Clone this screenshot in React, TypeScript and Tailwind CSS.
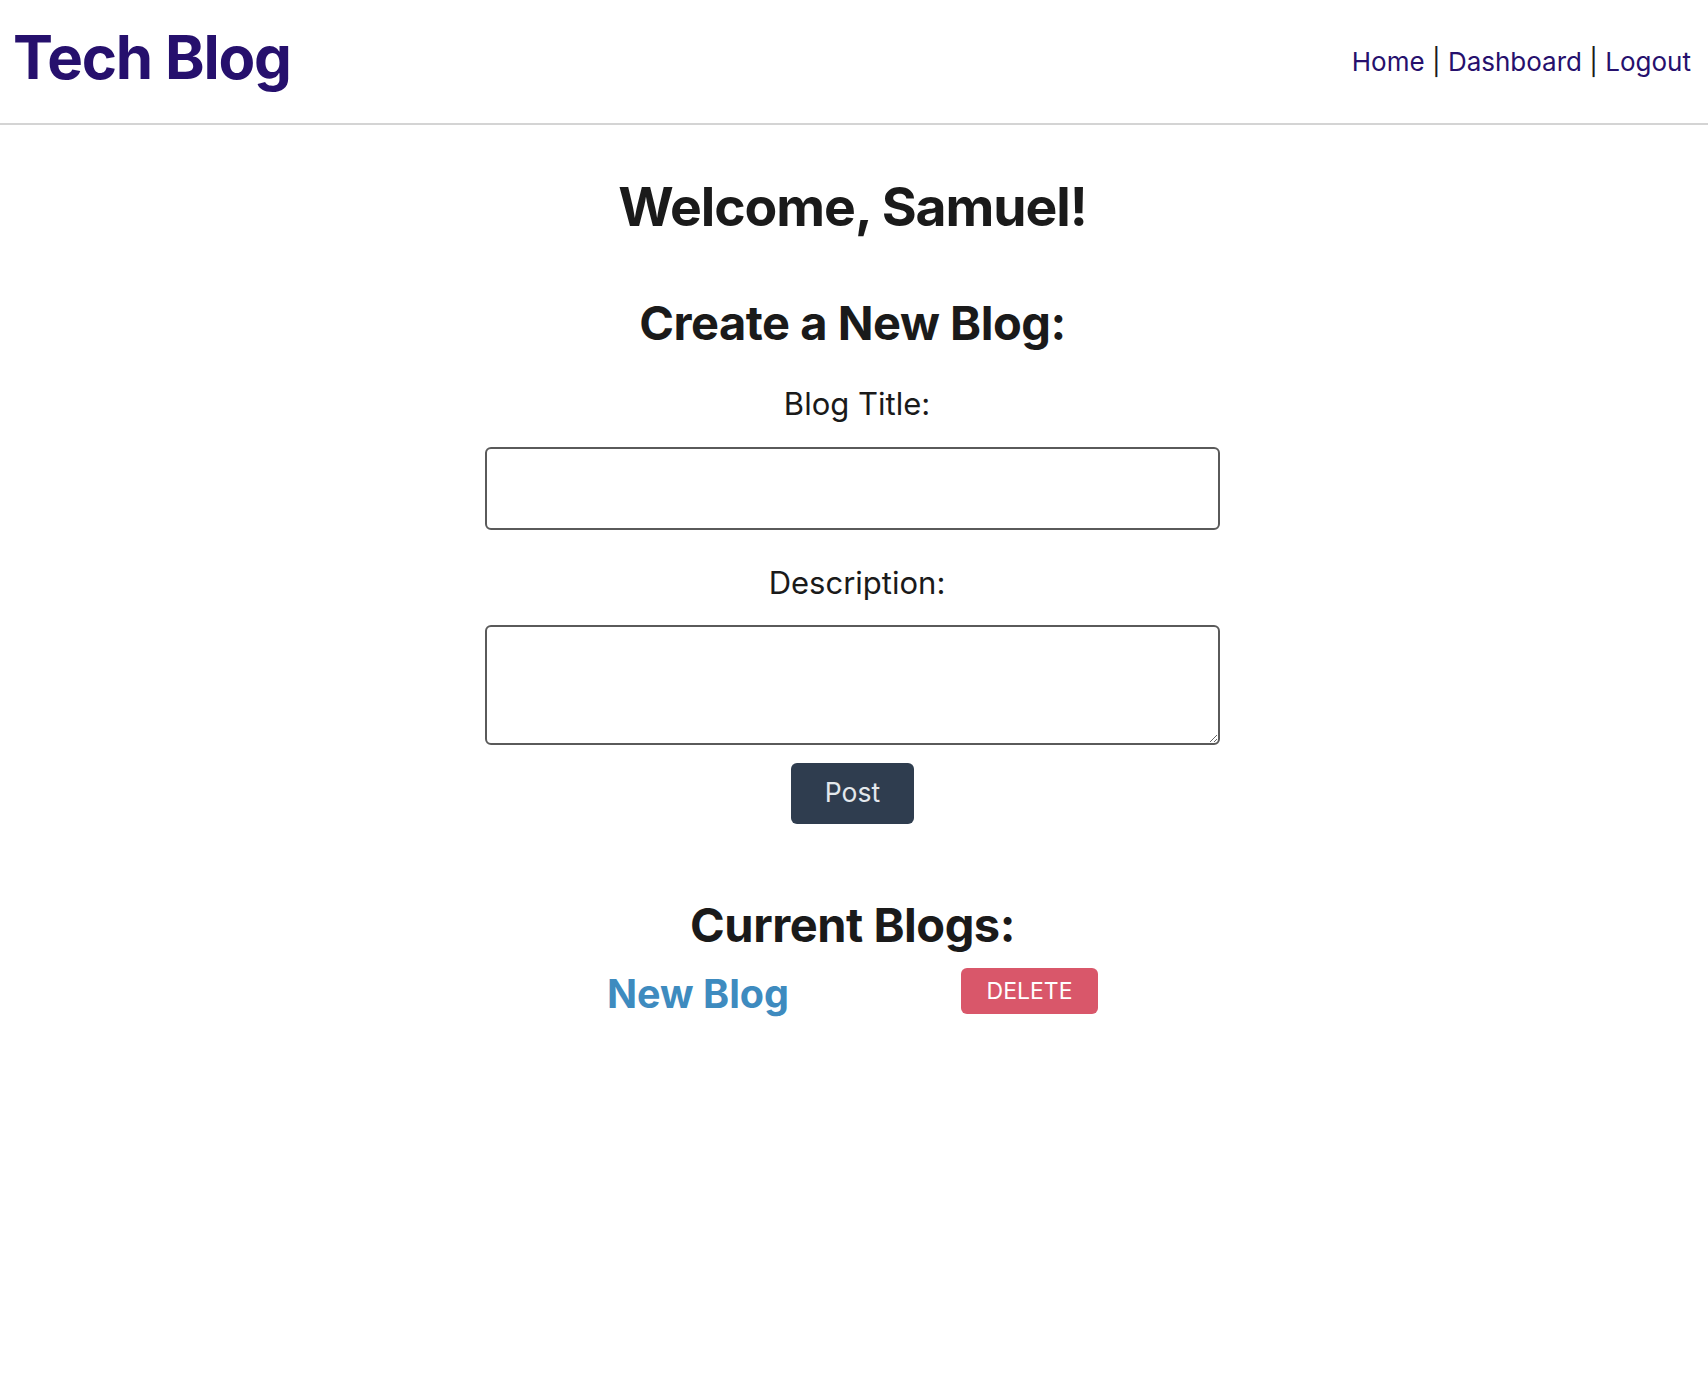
import React from "react";

export default function App() {
  return (
    <div className="min-h-screen bg-white font-['Inter',sans-serif] text-[#1a1a1a]">
      <header className="flex h-[125px] items-center justify-between border-b-2 border-[#d4d4d4] pl-[13px] pr-[17px]">
        <h1 className="mb-[10px] text-[60px] font-bold leading-none tracking-[-0.02em] text-[#26106d]">Tech Blog</h1>
        <nav className="text-[26px] text-[#26106d]">
          <a href="#">Home</a>
          <span className="text-[#1a1a1a]"> | </span>
          <a href="#">Dashboard</a>
          <span className="text-[#1a1a1a]"> | </span>
          <a href="#">Logout</a>
        </nav>
      </header>
      <main className="flex flex-col items-center pr-[3px]">
        <h2 className="mt-[55px] text-[53.5px] font-bold leading-none tracking-[-0.02em]">Welcome, Samuel!</h2>
        <h3 className="mt-[65px] text-[47px] font-bold leading-none tracking-[-0.01em]">Create a New Blog:</h3>
        <label className="ml-[9px] mt-[42px] text-[31px] leading-none">Blog Title:</label>
        <input className="mt-[28px] h-[83px] w-[735px] rounded-[6px] border-2 border-[#5a5a5a] outline-none" />
        <label className="ml-[9px] mt-[37px] text-[31px] leading-none">Description:</label>
        <textarea className="mt-[27px] h-[120px] w-[735px] rounded-[6px] border-2 border-[#5a5a5a] outline-none" />
        <button className="mt-[18px] h-[61px] w-[123px] rounded-[6px] bg-[#2f3d4f] text-[26.5px] text-[#e3e8ec]">Post</button>
        <h3 className="mt-[77px] text-[47px] font-bold leading-none tracking-[-0.01em]">Current Blogs:</h3>
        <div className="mt-[17px] flex w-[491px] items-center justify-between">
          <a href="#" className="text-[39.5px] font-bold text-[#3e8bbf]">New Blog</a>
          <button className="mb-[6px] h-[46px] w-[137px] rounded-[6px] bg-[#d9576a] text-[23px] text-white">DELETE</button>
        </div>
      </main>
    </div>
  );
}
